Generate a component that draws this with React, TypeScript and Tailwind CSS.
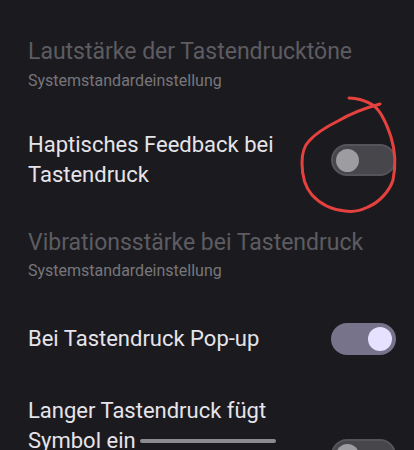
import React from "react";

function Toggle({ on }: { on: boolean }) {
  if (on) {
    return (
      <div className="flex h-[32px] w-[65px] shrink-0 items-center justify-end rounded-full bg-[#76738a] pr-[4px]">
        <div className="h-[24px] w-[24px] rounded-full bg-[#e6e1fe]" />
      </div>
    );
  }
  return (
    <div className="flex h-[32px] w-[65px] shrink-0 items-center rounded-full border-2 border-[#55545a] bg-[#47464b] pl-[3px]">
      <div className="h-[23px] w-[23px] rounded-full bg-[#9d9ca1]" />
    </div>
  );
}

export default function App() {
  const font = { fontFamily: "Roboto, 'Noto Sans', sans-serif" };
  return (
    <div
      className="relative h-[450px] w-[414px] overflow-hidden bg-[#1b1b1f]"
      style={font}
    >
      <div className="flex flex-col pl-[28px] pr-[18px] pt-[37px]">
        {/* Item 1 - disabled */}
        <div className="flex flex-col">
          <div className="text-[23px] leading-[30px] text-[#5d5c61]">
            Lautstärke der Tastendrucktöne
          </div>
          <div className="mt-[3px] text-[16px] leading-[22px] text-[#77767b]">
            Systemstandardeinstellung
          </div>
        </div>

        {/* Item 2 */}
        <div className="mt-[38px] flex items-center justify-between">
          <div className="w-[270px] text-[22px] leading-[30px] text-[#e6e4ea]">
            Haptisches Feedback bei Tastendruck
          </div>
          <Toggle on={false} />
        </div>

        {/* Item 3 - disabled */}
        <div className="mt-[38px] flex flex-col">
          <div className="text-[23px] leading-[30px] text-[#5d5c61]">
            Vibrationsstärke bei Tastendruck
          </div>
          <div className="mt-[2px] text-[16px] leading-[22px] text-[#77767b]">
            Systemstandardeinstellung
          </div>
        </div>

        {/* Item 4 */}
        <div className="mt-[41px] flex items-center justify-between">
          <div className="text-[22px] leading-[30px] text-[#e6e4ea]">
            Bei Tastendruck Pop-up
          </div>
          <Toggle on={true} />
        </div>

        {/* Item 5 */}
        <div className="mt-[41px] flex items-center justify-between">
          <div className="flex w-[280px] flex-col">
            <div className="text-[22px] leading-[30px] text-[#e6e4ea]">
              Langer Tastendruck fügt Symbol ein
            </div>
            <div className="h-[58px]" />
          </div>
          <Toggle on={false} />
        </div>
      </div>

      {/* Home indicator */}
      <div className="absolute left-[140px] top-[439px] h-[4px] w-[136px] rounded-full bg-[#8c8b90]" />

      {/* Red hand-drawn circle annotation */}
      <svg
        className="pointer-events-none absolute left-0 top-0"
        width="414"
        height="450"
        viewBox="0 0 414 450"
      >
        <path
          d="M349 98 C356 98 366 101 373 105 C380 110 386 122 391 137 C395 150 396 166 393 180 C390 190 380 202 368 207 C360 211 352 212 345 211 C335 210 322 206 312 195 C305 187 302 176 302 163 C302 154 304 146 309 141 C315 134 324 128 338 121 C350 114 365 108 380 104"
          fill="none"
          stroke="#e4413f"
          strokeWidth="3"
          strokeLinecap="round"
          strokeLinejoin="round"
        />
      </svg>
    </div>
  );
}
